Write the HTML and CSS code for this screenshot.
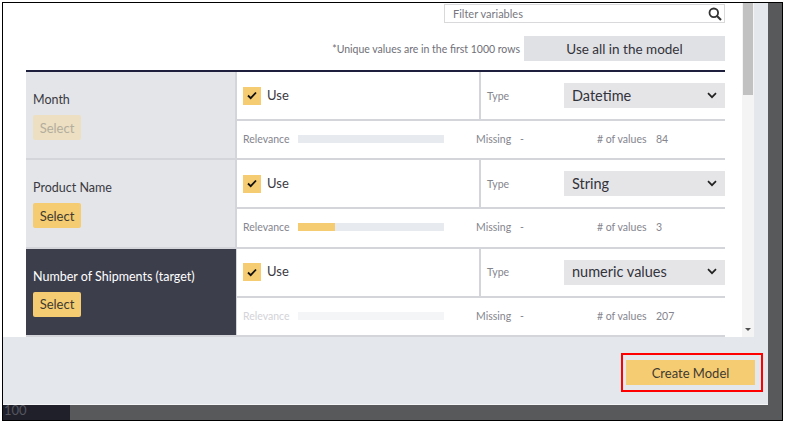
FILE: index.html
```html
<!DOCTYPE html>
<html lang="en">
<head>
    <meta charset="UTF-8">
    <title>Create Model</title>
    <link rel="stylesheet" href="styles.css">
</head>
<body>
    <div class="frame">
        <div class="modal">
            <div class="modal-body">
                <div class="content">
                    <div class="filter">
                        <input type="text" placeholder="Filter variables">
                        <svg width="14" height="14" viewBox="0 0 14 14"><circle cx="5.8" cy="5.8" r="4.3" fill="none" stroke="#333" stroke-width="1.8"/><path d="M9 9l4 4" stroke="#333" stroke-width="2.2"/></svg>
                    </div>
                    <div class="hint-row">
                        <span class="hint">*Unique values are in the first 1000 rows</span>
                        <button class="use-all">Use all in the model</button>
                    </div>
                    <div class="var-table">
                        <div class="var-row">
                            <div class="var-name">
                                <div class="name-text">Month</div>
                                <button class="select-btn disabled">Select</button>
                            </div>
                            <div class="var-detail">
                                <div class="use-row">
                                    <div class="use-cell">
                                        <span class="checkbox"><svg width="10" height="9" viewBox="0 0 10 9"><path d="M1 4.5l2.7 2.7L9 1.5" fill="none" stroke="#111" stroke-width="1.8"/></svg></span>
                                        <span class="use-text">Use</span>
                                    </div>
                                    <div class="type-cell">
                                        <span class="type-label">Type</span>
                                        <div class="type-select">
                                            <span>Datetime</span>
                                            <svg width="10" height="7" viewBox="0 0 10 7"><path d="M1 1.2L5 5.2l4-4" fill="none" stroke="#222" stroke-width="1.7"/></svg>
                                        </div>
                                    </div>
                                </div>
                                <div class="stats-row">
                                    <span class="stat-label">Relevance</span>
                                    <div class="bar"></div>
                                    <span class="stat-missing">Missing</span>
                                    <span class="stat-dash">-</span>
                                    <span class="stat-count">#&nbsp;of values</span>
                                    <span class="stat-value">84</span>
                                </div>
                            </div>
                        </div>
                        <div class="var-row">
                            <div class="var-name">
                                <div class="name-text">Product Name</div>
                                <button class="select-btn">Select</button>
                            </div>
                            <div class="var-detail">
                                <div class="use-row">
                                    <div class="use-cell">
                                        <span class="checkbox"><svg width="10" height="9" viewBox="0 0 10 9"><path d="M1 4.5l2.7 2.7L9 1.5" fill="none" stroke="#111" stroke-width="1.8"/></svg></span>
                                        <span class="use-text">Use</span>
                                    </div>
                                    <div class="type-cell">
                                        <span class="type-label">Type</span>
                                        <div class="type-select">
                                            <span>String</span>
                                            <svg width="10" height="7" viewBox="0 0 10 7"><path d="M1 1.2L5 5.2l4-4" fill="none" stroke="#222" stroke-width="1.7"/></svg>
                                        </div>
                                    </div>
                                </div>
                                <div class="stats-row">
                                    <span class="stat-label">Relevance</span>
                                    <div class="bar"><div class="bar-fill" style="width: 25%"></div></div>
                                    <span class="stat-missing">Missing</span>
                                    <span class="stat-dash">-</span>
                                    <span class="stat-count">#&nbsp;of values</span>
                                    <span class="stat-value">3</span>
                                </div>
                            </div>
                        </div>
                        <div class="var-row target">
                            <div class="var-name">
                                <div class="name-text">Number of Shipments (target)</div>
                                <button class="select-btn">Select</button>
                            </div>
                            <div class="var-detail">
                                <div class="use-row">
                                    <div class="use-cell">
                                        <span class="checkbox"><svg width="10" height="9" viewBox="0 0 10 9"><path d="M1 4.5l2.7 2.7L9 1.5" fill="none" stroke="#111" stroke-width="1.8"/></svg></span>
                                        <span class="use-text">Use</span>
                                    </div>
                                    <div class="type-cell">
                                        <span class="type-label">Type</span>
                                        <div class="type-select">
                                            <span>numeric values</span>
                                            <svg width="10" height="7" viewBox="0 0 10 7"><path d="M1 1.2L5 5.2l4-4" fill="none" stroke="#222" stroke-width="1.7"/></svg>
                                        </div>
                                    </div>
                                </div>
                                <div class="stats-row">
                                    <span class="stat-label muted">Relevance</span>
                                    <div class="bar muted"></div>
                                    <span class="stat-missing">Missing</span>
                                    <span class="stat-dash">-</span>
                                    <span class="stat-count">#&nbsp;of values</span>
                                    <span class="stat-value">207</span>
                                </div>
                            </div>
                        </div>
                    </div>
                </div>
                <div class="scrollbar">
                    <div class="scroll-thumb"></div>
                    <div class="scroll-arrow"></div>
                </div>
            </div>
            <div class="modal-footer">
                <div class="highlight">
                    <button class="create-btn">Create Model</button>
                </div>
            </div>
        </div>
        <div class="under-row">
            <div class="under-tab">100</div>
        </div>
    </div>
</body>
</html>
```

FILE: styles.css
```css
* {
    box-sizing: border-box;
}

html, body {
    height: 100%;
}

body {
    margin: 0;
    background-color: #fff;
    font-family: 'Lato', 'Open Sans', sans-serif;
    color: #3a3a42;
    overflow: hidden;
}

button {
    font-family: inherit;
    border: none;
    padding: 0;
    color: #3f3a30;
}

.frame {
    width: 781px;
    height: 419px;
    margin: 2px 0 0 2px;
    border: 1px solid #000;
    background-color: #58595b;
    display: flex;
    flex-direction: column;
}

.modal {
    width: 765px;
    height: 402px;
    flex: none;
    background-color: #e4e7eb;
    border-bottom: 1px solid #f4f5f6;
    display: flex;
    flex-direction: column;
}

.modal-body {
    height: 334px;
    flex: none;
    display: flex;
    background-color: #fff;
    margin-right: 14px;
}

.content {
    width: 739px;
    flex: none;
    padding: 1px 17px 0 23px;
}

.filter {
    width: 281px;
    height: 19px;
    margin-left: auto;
    padding: 0 2px 0 8px;
    border: 1px solid #d9d9dc;
    display: flex;
    align-items: center;
}

.filter input {
    flex: 1;
    min-width: 0;
    border: none;
    outline: none;
    padding: 0;
    font-family: inherit;
    font-size: 11px;
}

.filter input::placeholder {
    color: #77777f;
    opacity: 1;
}

.hint-row {
    display: flex;
    justify-content: flex-end;
    align-items: center;
    gap: 4px;
    margin-top: 13px;
}

.hint {
    font-size: 10.5px;
    color: #6f6f78;
}

.use-all {
    width: 201px;
    height: 25px;
    background-color: #e0e1e5;
    font-size: 13.5px;
    color: #33333b;
}

.var-table {
    margin-top: 9px;
    height: 267px;
    border-top: 2px solid #1d1f3d;
    display: flex;
    flex-direction: column;
}

.var-row {
    flex: 1;
    display: flex;
    border-bottom: 2px solid #d3d5da;
}

.var-name {
    width: 211px;
    flex: none;
    padding: 19px 7px 0;
    background-color: #e4e5e9;
    border-right: 2px solid #d3d5da;
    font-size: 12.5px;
}

.name-text {
    height: 17px;
    line-height: 17px;
    white-space: nowrap;
}

.select-btn {
    display: block;
    width: 48px;
    height: 25px;
    margin-top: 7px;
    background-color: #f5cc72;
    border-radius: 2px;
    font-size: 13px;
}

.select-btn.disabled {
    background-color: #ecdfc2;
    color: #b3ad9d;
}

.target .var-name {
    background-color: #3d3e4c;
    color: #fff;
    border-right-width: 1px;
}

.var-detail {
    flex: 1;
    display: flex;
    flex-direction: column;
}

.use-row {
    height: 49px;
    flex: none;
    display: flex;
    border-bottom: 2px solid #d3d5da;
}

.use-cell {
    width: 244px;
    flex: none;
    padding-left: 6px;
    border-right: 2px solid #d3d5da;
    display: flex;
    align-items: center;
    gap: 6px;
    font-size: 13px;
}

.use-text {
    padding-bottom: 2px;
}

.checkbox {
    width: 18px;
    height: 18px;
    background-color: #f5cc72;
    display: flex;
    align-items: center;
    justify-content: center;
}

.type-cell {
    flex: 1;
    padding-left: 6px;
    display: flex;
    align-items: center;
    justify-content: space-between;
}

.type-label {
    font-size: 10.5px;
    color: #85858e;
}

.type-select {
    width: 161px;
    height: 25px;
    padding: 0 8px 1px;
    background-color: #e5e5e8;
    font-size: 14.5px;
    color: #33333b;
    display: flex;
    align-items: center;
    justify-content: space-between;
}

.stats-row {
    flex: 1;
    padding: 0 0 1px 6px;
    display: flex;
    align-items: center;
    font-size: 10.5px;
    color: #85858e;
}

.stat-label {
    width: 55px;
    flex: none;
}

.stat-label.muted {
    color: #d3d3d8;
}

.bar {
    width: 146px;
    height: 8px;
    flex: none;
    background-color: #e7eaee;
}

.bar.muted {
    background-color: #f4f5f7;
}

.bar-fill {
    height: 100%;
    background-color: #f5cc72;
}

.stat-missing {
    width: 44px;
    margin-left: 32px;
    flex: none;
}

.stat-dash {
    width: 77px;
    flex: none;
}

.stat-count {
    width: 59px;
    flex: none;
}

.scrollbar {
    width: 12px;
    flex: none;
    background-color: #f4f4f4;
    display: flex;
    flex-direction: column;
    align-items: center;
    justify-content: space-between;
}

.scroll-thumb {
    width: 10px;
    height: 92px;
    background-color: #c1c1c1;
}

.scroll-arrow {
    width: 0;
    height: 0;
    margin-bottom: 6px;
    border: 3px solid transparent;
    border-top: 3px solid #505050;
    border-bottom: none;
}

.modal-footer {
    flex: 1;
    display: flex;
    justify-content: flex-end;
    padding: 16px 5px 0 0;
}

.highlight {
    height: 39px;
    padding: 5px 6px 5px 3px;
    border: 2px solid #f00;
}

.create-btn {
    width: 129px;
    height: 25px;
    background-color: #f5cc72;
    font-size: 13px;
}

.under-row {
    flex: 1;
    display: flex;
}

.under-tab {
    width: 67px;
    background-color: #20202b;
    color: #55565e;
    font-size: 13px;
    line-height: 10px;
    padding-left: 1px;
}
```
